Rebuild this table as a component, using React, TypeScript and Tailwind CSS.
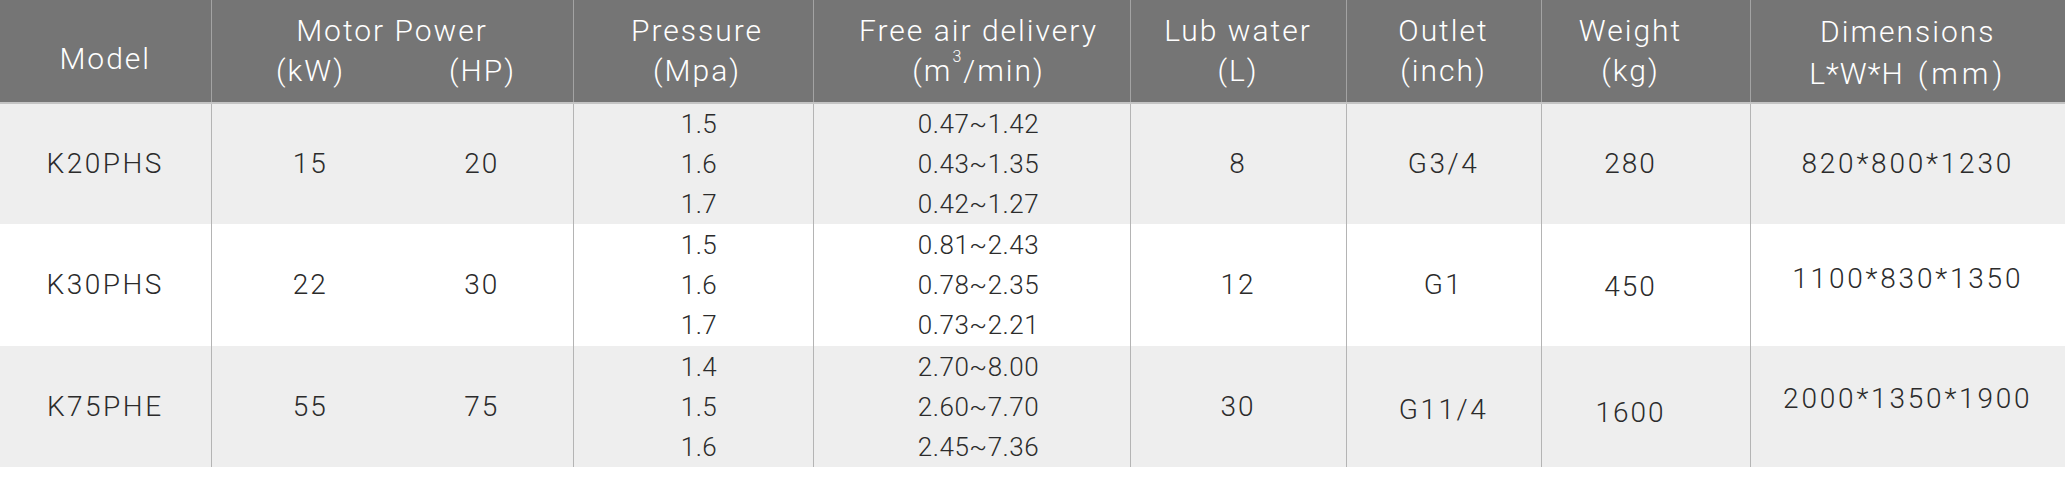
import React from 'react';

type Row = {
  model: string;
  kw: string;
  hp: string;
  pressure: string[];
  fad: string[];
  lub: string;
  outlet: string;
  weight: string;
  dims: string;
  bg: string;
  // small vertical nudges, the source table is not perfectly centred
  outletPad: string;
  weightPad: string;
  dimsPad: string;
};

const rows: Row[] = [
  {
    model: 'K20PHS',
    kw: '15',
    hp: '20',
    pressure: ['1.5', '1.6', '1.7'],
    fad: ['0.47~1.42', '0.43~1.35', '0.42~1.27'],
    lub: '8',
    outlet: 'G3/4',
    weight: '280',
    dims: '820*800*1230',
    bg: 'bg-[#eeeeee]',
    outletPad: '',
    weightPad: '',
    dimsPad: '',
  },
  {
    model: 'K30PHS',
    kw: '22',
    hp: '30',
    pressure: ['1.5', '1.6', '1.7'],
    fad: ['0.81~2.43', '0.78~2.35', '0.73~2.21'],
    lub: '12',
    outlet: 'G1',
    weight: '450',
    dims: '1100*830*1350',
    bg: 'bg-white',
    outletPad: '',
    weightPad: 'pt-[4px]',
    dimsPad: 'pb-[12px]',
  },
  {
    model: 'K75PHE',
    kw: '55',
    hp: '75',
    pressure: ['1.4', '1.5', '1.6'],
    fad: ['2.70~8.00', '2.60~7.70', '2.45~7.36'],
    lub: '30',
    outlet: 'G11/4',
    weight: '1600',
    dims: '2000*1350*1900',
    bg: 'bg-[#eeeeee]',
    outletPad: 'pt-[6px]',
    weightPad: 'pt-[12px]',
    dimsPad: 'pb-[16px]',
  },
];

function Head({ top, bottom }: { top: string; bottom: string }) {
  return (
    <div className="flex flex-col items-center leading-[40px]">
      <span>{top}</span>
      <span>{bottom}</span>
    </div>
  );
}

export default function App() {
  const cell = 'border-l border-[#b4b4b4] text-center align-middle';
  const headCell = 'border-l border-[#a3a3a3] text-center align-middle font-light';

  return (
    <div className="w-[2067px] h-[485px] bg-white font-['Roboto',sans-serif]">
      <table className="table-fixed border-collapse w-[2065px]">
        <colgroup>
          <col className="w-[211px]" />
          <col className="w-[198px]" />
          <col className="w-[164px]" />
          <col className="w-[240px]" />
          <col className="w-[317px]" />
          <col className="w-[216px]" />
          <col className="w-[195px]" />
          <col className="w-[209px]" />
          <col className="w-[315px]" />
        </colgroup>
        <thead>
          <tr className="h-[103px] bg-[#757575] text-white text-[30px] tracking-[2px] border-b-2 border-[#c4c4c4]">
            <th className="text-center align-middle font-light pt-[14px]">Model</th>
            <th colSpan={2} className={headCell}>
              <div className="flex flex-col leading-[40px]">
                <span>Motor Power</span>
                <div className="flex">
                  <span className="w-[198px] text-center">(kW)</span>
                  <span className="w-[146px] text-center">(HP)</span>
                </div>
              </div>
            </th>
            <th className={`${headCell} pl-[8px]`}>
              <Head top="Pressure" bottom="(Mpa)" />
            </th>
            <th className={`${headCell} pl-[14px]`}>
              <div className="flex flex-col items-center leading-[40px]">
                <span>Free air delivery</span>
                <span>
                  (m<sup className="text-[16px] align-[11px]">3</sup>/min)
                </span>
              </div>
            </th>
            <th className={headCell}>
              <Head top="Lub water" bottom="(L)" />
            </th>
            <th className={headCell}>
              <Head top="Outlet" bottom="(inch)" />
            </th>
            <th className={`${headCell} pr-[30px]`}>
              <Head top="Weight" bottom="(kg)" />
            </th>
            <th className={headCell}>
              <div className="flex flex-col items-center leading-[42px] pt-[4px]">
                <span>Dimensions</span>
                <span className="tracking-[1px]">
                  L*W*H<span className="ml-[14px] tracking-[4px]">(mm)</span>
                </span>
              </div>
            </th>
          </tr>
        </thead>
        <tbody className="text-[#2b2b2b] font-light">
          {rows.map((r, i) => (
            <tr
              key={r.model}
              className={`${r.bg} ${i === 1 ? 'h-[122px]' : 'h-[121px]'}`}
            >
              <td className="text-center align-middle text-[28px] tracking-[2.5px]">{r.model}</td>
              <td className={`${cell} text-[28px] tracking-[2px]`}>{r.kw}</td>
              <td className="text-center align-middle text-[28px] tracking-[2px] pr-[18px]">{r.hp}</td>
              <td className={`${cell} text-[26px] tracking-[0.5px] pl-[12px]`}>
                <div className="flex flex-col leading-[40px]">
                  {r.pressure.map((p) => (
                    <span key={p}>{p}</span>
                  ))}
                </div>
              </td>
              <td className={`${cell} text-[26px] tracking-[0.5px] pl-[14px]`}>
                <div className="flex flex-col leading-[40px]">
                  {r.fad.map((f) => (
                    <span key={f}>{f}</span>
                  ))}
                </div>
              </td>
              <td className={`${cell} text-[28px] tracking-[2px]`}>{r.lub}</td>
              <td className={`${cell} text-[28px] tracking-[2.5px] ${r.outletPad}`}>{r.outlet}</td>
              <td className={`${cell} text-[28px] tracking-[2px] pr-[30px] ${r.weightPad}`}>{r.weight}</td>
              <td className={`${cell} text-[28px] tracking-[2.8px] ${r.dimsPad}`}>{r.dims}</td>
            </tr>
          ))}
        </tbody>
      </table>
    </div>
  );
}
